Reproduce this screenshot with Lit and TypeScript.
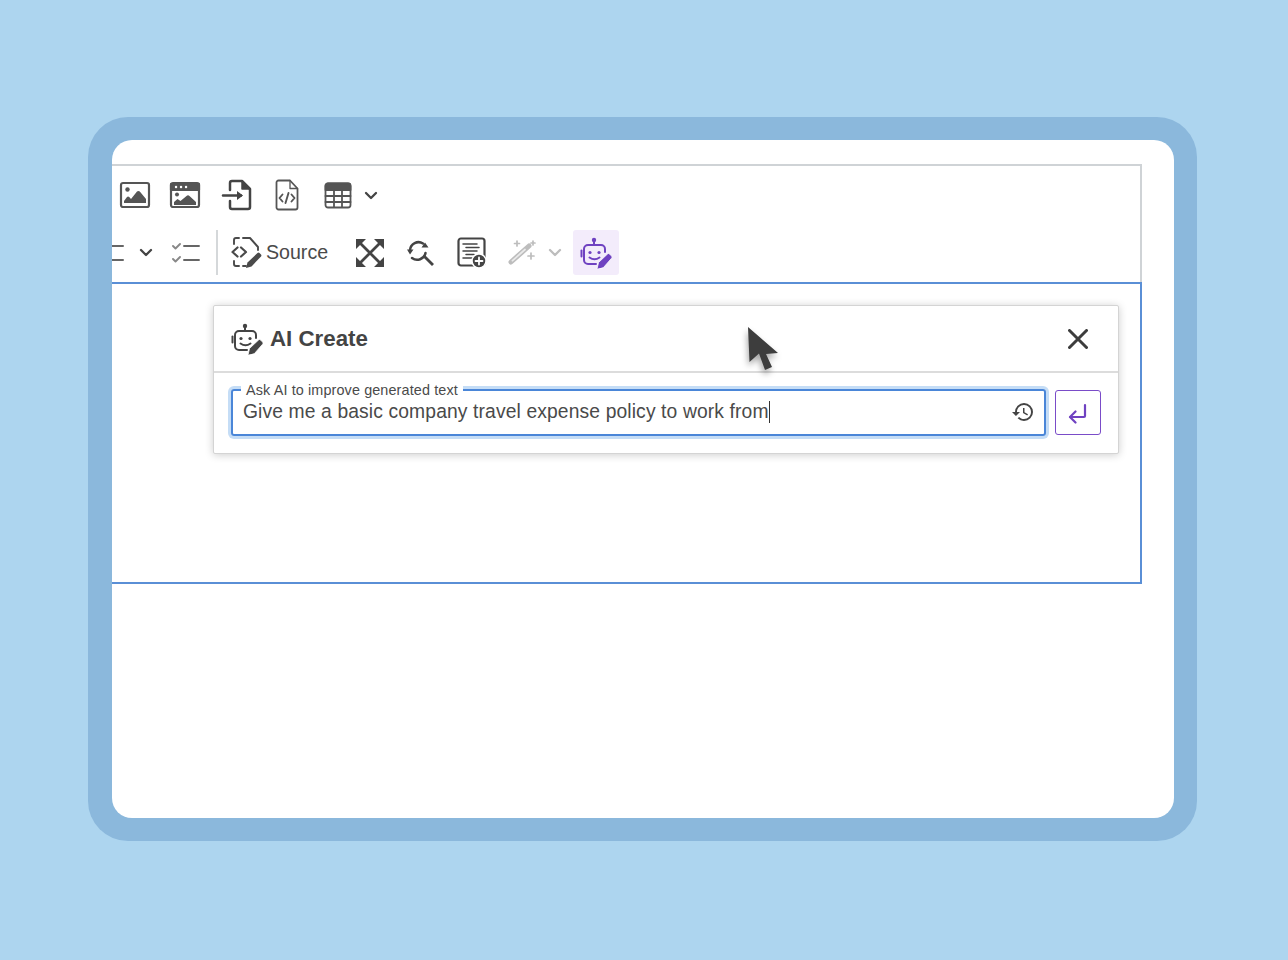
import { LitElement, html, css, svg } from "lit";
import { customElement } from "lit/decorators.js";

const robot = svg`
  <circle cx="14" cy="3" r="2.200" fill="currentColor" stroke="none" />
  <path d="M14 5v3" />
  <path d="M16 27H8a4 4 0 0 1-4-4V12a4 4 0 0 1 4-4h13a4 4 0 0 1 4 4v3" />
  <path d="M1.500 13.500v6" />
  <circle cx="10" cy="15.500" r="1.600" fill="currentColor" stroke="none" />
  <circle cx="19" cy="15.500" r="1.600" fill="currentColor" stroke="none" />
  <path d="M9.500 20.500q5 3.500 10 0" />
  <path d="M17 32l1.500-6.500L27.500 17a1.500 1.500 0 0 1 2.100 0l2 2.100a1.500 1.500 0 0 1 0 2.100L23.500 30.500z" fill="currentColor" stroke="#fff" stroke-width=".8" />
`;

@customElement("app-root")
export class AppRoot extends LitElement {
  static styles = css`
    :host { display: block; height: 960px; background: #add5ef; font-family: "Liberation Sans", Arial, sans-serif; color: #444; overflow: hidden; }
    .page { padding: 117px 91px 119px 88px; }
    .frame { height: 724px; box-sizing: border-box; padding: 23px 23px 23px 24px; background: #8bb8dc; border-radius: 40px; }
    .sheet { position: relative; height: 678px; box-sizing: border-box; padding: 24px 32px 0 0; background: #fff; border-radius: 20px; overflow: hidden; }
    .toolbar { height: 118px; box-sizing: border-box; border-top: 2px solid #cfd3d6; border-right: 2px solid #cfd3d6; }
    svg { display: block; fill: none; stroke: currentColor; stroke-linecap: round; stroke-linejoin: round; }
    .row { display: grid; align-items: center; justify-items: center; }
    .row1 { height: 58px; grid-template-columns: 46px 54px 50px 50px 52px 14px; }
    .row2 { height: 57px; grid-template-columns: 26px 16px 62px 2px 126px 52px 50px 52px 48px 18px 9px 46px; }
    .src { display: flex; align-items: center; justify-self: start; gap: 3px; padding-left: 13px; font-size: 19.600px; color: #4a4a4a; }
    .sep { width: 2px; height: 45px; background: #d5d8da; }
    .ai { width: 46px; height: 45px; display: flex; align-items: center; justify-content: center; background: #f3ecfb; border-radius: 3px; color: #6f42c1; }
    .muted { color: #bdbdbd; }
    .thin { color: #666; }
    .cut { justify-self: start; }
    .content { height: 302px; box-sizing: border-box; padding: 21px 21px 0 101px; border-top: 2px solid #5a8fd6; border-bottom: 2px solid #5a8fd6; border-right: 2px solid #5a8fd6; }
    .dialog { height: 149px; box-sizing: border-box; background: #fff; border: 1px solid #d4d4d4; box-shadow: 0 1px 8px rgba(0,0,0,.2); border-radius: 2px; }
    .head { height: 65px; display: flex; align-items: center; gap: 7px; padding: 0 30px 0 17px; border-bottom: 2px solid #dcdcdc; }
    .title { flex: 1; font-size: 22.300px; font-weight: 700; color: #444; }
    .body { display: flex; align-items: flex-start; gap: 9px; padding: 16px 17px 0 17px; }
    .field { position: relative; flex: 1; height: 47px; box-sizing: border-box; display: flex; align-items: center; justify-content: space-between; padding: 0 9px 2px 10px; border: 2px solid #4a86d8; border-radius: 3px; box-shadow: 0 0 0 3px #c5ddf6; }
    .legend { position: absolute; left: 8px; top: -9px; padding: 0 5px; background: #fff; font-size: 14.400px; letter-spacing: .12px; line-height: 16px; color: #4a4a4a; white-space: nowrap; }
    .value { font-size: 19.300px; letter-spacing: .12px; color: #4a4a4a; white-space: nowrap; border-right: 1.500px solid #333; line-height: 22px; margin-top: 1px; }
    .send { width: 46px; height: 45px; box-sizing: border-box; margin-top: 1px; display: flex; align-items: center; justify-content: center; border: 1.500px solid #7a4cc8; border-radius: 3px; color: #6f42c1; }
    .pointer { position: absolute; left: 628px; top: 180px; color: #3d3d3d; filter: drop-shadow(-1px 4px 3px rgba(0,0,0,.35)) blur(.7px); }
  `;

  render() {
    return html`
      <div class="page"><div class="frame"><div class="sheet">
        <div class="toolbar">
          <div class="row row1">
            <svg width="32" height="28" viewBox="0 0 32 28" stroke-width="2.200" color="#555">
              <rect x="2" y="2" width="28" height="24" rx="2" />
              <circle cx="8.500" cy="8.500" r="2.200" fill="currentColor" stroke="none" />
              <path d="M5 22v-2l3-4c.7-.7 1.500-.7 2.200 0l1.800 2 6-7.500c.8-.8 2-.8 2.800 0l6.200 7.500v4z" fill="currentColor" stroke="none" />
            </svg>
            <svg width="32" height="28" viewBox="0 0 32 28" stroke-width="2.200" color="#555">
              <rect x="2" y="2" width="28" height="24" rx="2" />
              <path d="M2 3h28v6H2z" fill="currentColor" />
              <path d="M7 6h.1M12 6h.1M17 6h.1" stroke="#fff" stroke-width="2.400" />
              <circle cx="8" cy="13.500" r="2" fill="currentColor" stroke="none" />
              <path d="M5 24v-3l3.500-3 3 2 6-5c1-1 2-1 3 0l6.500 6v3z" fill="currentColor" stroke="none" />
            </svg>
            <svg width="32" height="32" viewBox="0 0 32 32" stroke-width="2.500" color="#444">
              <path d="M9 11V4a2 2 0 0 1 2-2h10l8 8v18a2 2 0 0 1-2 2H11a2 2 0 0 1-2-2v-6" />
              <path d="M21 2v8h8" fill="currentColor" stroke-width="1.500" />
              <path d="M2 16.500h18" />
              <path d="M16 12l6 4.500-6 4.500z" fill="currentColor" stroke="none" />
            </svg>
            <svg width="24" height="32" viewBox="0 0 24 32" stroke-width="1.800" color="#555">
              <path d="M1.500 3.500a2 2 0 0 1 2-2H15l7.500 8v19a2 2 0 0 1-2 2h-17a2 2 0 0 1-2-2z" />
              <path d="M15 1.500v8h7.500" stroke-width="1.300" />
              <path d="M7.500 15.500l-3 3.500 3 3.500M16.500 15.500l3 3.500-3 3.500M13.500 14l-3 10" stroke-width="1.900" />
            </svg>
            <svg width="28" height="27" viewBox="0 0 28 27" stroke-width="1.800" color="#555">
              <rect x="1.500" y="1.500" width="25" height="24" rx="2.500" />
              <path d="M1.500 4a2.500 2.500 0 0 1 2.500-2.500h20A2.500 2.500 0 0 1 26.500 4v4h-25z" fill="currentColor" />
              <path d="M10 8v17M18 8v17M1.500 14h25M1.500 20h25" />
            </svg>
            <svg width="14" height="9" viewBox="0 0 14 9" stroke-width="2.300" color="#444"><path d="M2 2l5 5 5-5" /></svg>
          </div>
          <div class="row row2">
            <svg class="cut" width="12" height="20" viewBox="0 0 12 20" stroke-width="2" color="#666" stroke-linecap="butt"><path d="M0 3h11M0 17h11" /></svg>
            <svg width="14" height="9" viewBox="0 0 14 9" stroke-width="2.300" color="#444"><path d="M2 2l5 5 5-5" /></svg>
            <svg class="thin" width="30" height="22" viewBox="0 0 30 22" stroke-width="1.900">
              <path d="M3 4l2.500 2.500L10 2M3 17l2.500 2.500L10 15" color="#888" />
              <path d="M14 4h15M14 18h15" />
            </svg>
            <div class="sep"></div>
            <div class="src">
              <svg width="32" height="34" viewBox="0 0 32 34" stroke-width="1.900" color="#4a4a4a">
                <path d="M3 8V4a2 2 0 0 1 2-2h3M12 2h7l8 9v3" />
                <path d="M3 25v3a2 2 0 0 0 2 2h3M12 30h3" />
                <path d="M6.500 11.500L1.500 16l5 4.500M10 11.500l5 4.500-5 4.500" stroke-width="2.200" />
                <path d="M15 32l1.500-5.500L26.500 17a1.500 1.500 0 0 1 2 0l1.500 1.500a1.500 1.500 0 0 1 0 2L20.500 30.500z" fill="currentColor" stroke="none" />
              </svg>
              <span>Source</span>
            </div>
            <svg width="28" height="28" viewBox="0 0 28 28" stroke-width="2.800" color="#444">
              <path d="M4 4l20 20M24 4L4 24" />
              <path d="M0 0h10L0 10zM28 0v10L18 0zM0 28V18l10 10zM28 28H18l10-10z" fill="currentColor" stroke="none" />
            </svg>
            <svg width="28" height="28" viewBox="0 0 28 28" stroke-width="2.500" color="#444">
              <path d="M3 11A8.500 8.500 0 0 1 16 4.500" />
              <path d="M18.500 14A8.500 8.500 0 0 1 5 19" />
              <path d="M0 10.500h6.500L3 15.500zM21.500 8.500h-7L18 3.500zM16 18l2-2 9 9-2 2z" fill="currentColor" stroke="none" />
            </svg>
            <svg width="30" height="31" viewBox="0 0 30 31" stroke-width="2.200" color="#444">
              <rect x="1.500" y="1.500" width="26" height="27" rx="2.500" />
              <path d="M6 7h14M9 10.500h13M6 14h14M9 17.500h8M6 21h11" stroke-width="1.500" />
              <circle cx="22" cy="24" r="7" fill="currentColor" stroke="#fff" stroke-width="1.500" />
              <path d="M22 20.500v7M18.500 24h7" stroke="#fff" stroke-width="1.800" />
            </svg>
            <svg class="muted" width="28" height="26" viewBox="0 0 28 26" stroke-width="2">
              <path d="M3 22L21 6" stroke-width="5" />
              <path d="M4.500 20.700L17 9.500" stroke="#e9e9e9" stroke-width="1.800" />
              <path d="M9 1v5M6.500 3.500h5M25 1v4M23 3h4M23 13v6M20 16h6" stroke-width="1.700" />
            </svg>
            <svg class="muted" width="14" height="9" viewBox="0 0 14 9" stroke-width="2.300"><path d="M2 2l5 5 5-5" /></svg>
            <div></div>
            <div class="ai"><svg width="32" height="32" viewBox="0 0 32 32" stroke-width="2">${robot}</svg></div>
          </div>
        </div>
        <div class="content">
          <div class="dialog">
            <div class="head">
              <svg width="32" height="32" viewBox="0 0 32 32" stroke-width="2" color="#444">${robot}</svg>
              <span class="title">AI Create</span>
              <svg width="20" height="20" viewBox="0 0 20 20" stroke-width="3" color="#3d3d3d" stroke-linecap="butt"><path d="M1.500 1.500l17 17M18.500 1.500l-17 17" /></svg>
            </div>
            <div class="body">
              <div class="field">
                <span class="legend">Ask AI to improve generated text</span>
                <span class="value">Give me a basic company travel expense policy to work from</span>
                <svg width="24" height="24" viewBox="0 0 24 24" color="#444" stroke="none"><path fill="currentColor" stroke="none" d="M13 3a9 9 0 0 0-9 9H1l3.890 3.890.07.14L9 12H6c0-3.870 3.130-7 7-7s7 3.130 7 7-3.130 7-7 7c-1.930 0-3.680-.79-4.940-2.060l-1.420 1.420A8.954 8.954 0 0 0 13 21a9 9 0 0 0 0-18zm-1 5v5l4.280 2.540.72-1.210-3.500-2.080V8H12z" /></svg>
              </div>
              <div class="send">
                <svg width="22" height="22" viewBox="0 0 22 22" stroke-width="2.200"><path d="M18 3v11a1 1 0 0 1-1 1H3.500" /><path d="M8.500 9.500L3 15l5.500 5.500" /></svg>
              </div>
            </div>
          </div>
        </div>
        <svg class="pointer" width="44" height="56" viewBox="0 0 44 56" stroke="none">
          <path d="M8 7l1.500 35 9.500-8.500L25 50l7-3-6-13 12-1z" fill="currentColor" stroke="none" />
        </svg>
      </div></div></div>
    `;
  }
}
